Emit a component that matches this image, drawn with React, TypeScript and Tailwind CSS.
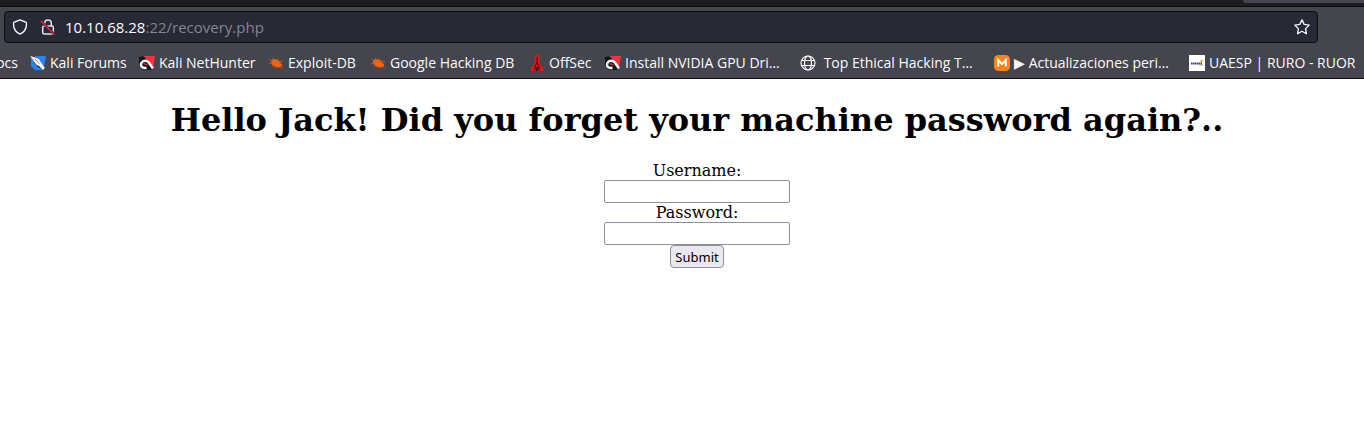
import React from "react";

function DragonIcon({ color }: { color: string }) {
  return (
    <svg viewBox="0 0 16 16" className="h-4 w-4" aria-hidden="true">
      <path d="M1 1H16L13.500 15H5L1 11Z" fill={color} />
      <path d="M0 1L4 1L10 5L12 9L15.500 13L14 15L8 12L5 9L3 5Z" fill="#17171c" />
      <path d="M0 1L4.500 2L9 4L11.500 8L15 13L13 15L9.500 11.500L6.500 10L4 6.500Z" fill="#f4f4f4" />
      <path d="M5 4L9 8.500" stroke="#666" strokeWidth="0.8" />
    </svg>
  );
}

function HookIcon() {
  return (
    <svg viewBox="0 0 16 16" className="h-4 w-4" aria-hidden="true">
      <path d="M0 2L5 1L14 13L12 15H4L0 11Z" fill="#17171c" />
      <path d="M4 1H16L14 13L9 5Z" fill="#f5333f" />
      <path d="M14 13.500L10.500 8.500C8.500 4.800 4 4.800 2.500 7.800C1 10.800 3 13.800 7.500 12.800" fill="none" stroke="#f6f6f6" strokeWidth="2.500" />
      <path d="M4.500 8.500L8.500 10" stroke="#f5333f" strokeWidth="1.3" />
    </svg>
  );
}

function BugIcon() {
  return (
    <svg viewBox="0 0 16 16" className="h-4 w-4" aria-hidden="true">
      <path d="M3 5.500C5 3.500 9 4 11 6L14.500 10L12.500 12.500C9 13 5 11.500 3.500 9Z" fill="#ee6413" />
      <path d="M4 6L1.500 4M4 8L1 8.500M6 5L5 2.500M9 5L10 3.500M11 6L15 6.500M6 10L4 12M8 11L7.500 13M12 11L15 13.500" stroke="#c45a1b" strokeWidth="0.9" />
    </svg>
  );
}

function OffSecIcon() {
  return (
    <svg viewBox="0 0 16 16" className="h-4 w-4" aria-hidden="true">
      <path d="M5.500 0H10.500V8L14.500 13.500V16H1.500V13.500L5.500 8Z" fill="#d31a1d" />
      <path d="M8 2V9M8 8L6 11V15M8 8L10 11V15" stroke="#3a080b" strokeWidth="0.9" fill="none" />
      <path d="M7 12H9V16H7Z" fill="#3a1a20" />
    </svg>
  );
}

function GlobeIcon() {
  return (
    <svg viewBox="0 0 16 16" className="h-4 w-4" fill="none" stroke="#fbfbfe" strokeWidth="1.2" aria-hidden="true">
      <circle cx="8" cy="8" r="7" />
      <ellipse cx="8" cy="8" rx="3.500" ry="7" />
      <path d="M1.500 5.500H14.500M1.500 10.500H14.500" />
    </svg>
  );
}

function OrangeIcon() {
  return (
    <svg viewBox="0 0 16 16" className="h-4 w-4" aria-hidden="true">
      <rect width="16" height="16" rx="4.500" fill="#f98418" />
      <path d="M4.200 11.500V5L8 9L11.800 5V11.500" fill="none" stroke="#fff" strokeWidth="2" />
    </svg>
  );
}

function UaespIcon() {
  return (
    <svg viewBox="0 0 16 16" className="h-4 w-4" aria-hidden="true">
      <rect width="16" height="16" fill="#fff" />
      <path d="M2 8.500H13" stroke="#33477d" strokeWidth="1.8" strokeDasharray="1.6 0.4" />
      <path d="M10 10H14" stroke="#7d8cae" strokeWidth="0.8" />
      <circle cx="12.500" cy="6" r="1.300" fill="#f5ad24" />
    </svg>
  );
}

const bookmarks: { label: string; icon: React.ReactNode }[] = [
  { label: "Kali Forums", icon: <DragonIcon color="#2385f5" /> },
  { label: "Kali NetHunter", icon: <HookIcon /> },
  { label: "Exploit-DB", icon: <BugIcon /> },
  { label: "Google Hacking DB", icon: <BugIcon /> },
  { label: "OffSec", icon: <OffSecIcon /> },
  { label: "Install NVIDIA GPU Dri…", icon: <HookIcon /> },
  { label: "\u00a0Top Ethical Hacking T…", icon: <GlobeIcon /> },
  { label: "▶ Actualizaciones peri…", icon: <OrangeIcon /> },
  { label: "UAESP | RURO - RUOR", icon: <UaespIcon /> },
];

function AddressBar() {
  return (
    <div className="mr-[46px] ml-1 flex h-8 items-center rounded-sm border border-[#0c0c0d] bg-[#272935] px-[7px]">
      <button type="button" aria-label="Site protection" className="h-4 w-4">
        <svg viewBox="0 0 16 16" className="h-4 w-4" fill="none" stroke="#fbfbfe" strokeWidth="1.3" strokeLinejoin="round">
          <path d="M8 .8L14.300 3.300C15 8.500 12.500 13 8 15.200C3.500 13 1 8.500 1.700 3.300Z" />
        </svg>
      </button>
      <button type="button" aria-label="Connection not secure" className="ml-3 h-4 w-4">
        <svg viewBox="0 0 16 16" className="h-4 w-4" fill="none">
          <path d="M4.700 7V4.200A3.300 3.300 0 0 1 11.300 4.200V7" stroke="#e4e4ea" strokeWidth="1.500" />
          <rect x="2.700" y="7" width="10.600" height="8" rx="1.500" stroke="#e4e4ea" strokeWidth="1.500" />
          <path d="M1 2L14.500 15.500" stroke="#272935" strokeWidth="2.500" />
          <path d="M1 2L14.500 15.500" stroke="#e22850" strokeWidth="1.500" />
        </svg>
      </button>
      <div className="ml-[9px] flex-1 text-[15px] leading-5 whitespace-nowrap text-[#85868e]">
        <span className="text-[#fbfbfe]">10.10.68.28</span>:22/recovery.php
      </div>
      <button type="button" aria-label="Bookmark this page" className="h-4 w-4">
        <svg viewBox="0 0 16 16" className="h-4 w-4" fill="none" stroke="#fbfbfe" strokeWidth="1.3" strokeLinejoin="round">
          <path d="M8 .9L10.200 5.400L15.200 6.100L11.600 9.600L12.400 14.700L8 12.300L3.600 14.700L4.400 9.600L.8 6.100L5.800 5.400Z" />
        </svg>
      </button>
    </div>
  );
}

export default function App() {
  return (
    <div className="min-h-screen overflow-hidden bg-white font-['Open_Sans','Noto_Sans',sans-serif]">
      <header className="border-b border-[#0c0c0d] bg-[#45454d]">
        <div className="flex h-[7px] justify-end border-b border-[#0c0c0d] bg-[#1c1b22]">
          <div className="h-[3px] w-[121px] rounded-bl-sm bg-[#45454d]" />
        </div>
        <div className="pt-1">
          <AddressBar />
        </div>
        <nav
          aria-label="Bookmarks"
          className="grid h-[35px] grid-cols-[18px_97px_117px_90px_147px_64px_183px_182px_183px_auto] items-center gap-3 pt-1 text-[14px] leading-5 whitespace-nowrap text-[#fbfbfe]"
        >
          <a href="#" className="flex justify-end overflow-hidden">ocs</a>
          {bookmarks.map((b) => (
            <a key={b.label} href="#" className="flex items-center gap-1">
              {b.icon}
              <span>{b.label}</span>
            </a>
          ))}
        </nav>
      </header>
      <main className="pl-[30px] text-center font-['DejaVu_Serif',serif] text-base leading-[19px] text-black">
        <h1 className="py-[21px] text-[32px] leading-10 font-bold">Hello Jack! Did you forget your machine password again?..</h1>
        <form className="flex flex-col items-center" onSubmit={(e) => e.preventDefault()}>
          <label htmlFor="username">Username:</label>
          <input id="username" type="text" className="h-[23px] w-[186px] rounded-xs border border-[#8f8f9d] bg-white px-1 font-['Noto_Sans',sans-serif] text-[13px]" />
          <label htmlFor="password">Password:</label>
          <input id="password" type="password" className="h-[23px] w-[186px] rounded-xs border border-[#8f8f9d] bg-white px-1 font-['Noto_Sans',sans-serif] text-[13px]" />
          <button type="submit" className="h-[23px] rounded-sm border border-[#8f8f9d] bg-[#e9e9ed] px-1 font-['Noto_Sans',sans-serif] text-[13px] leading-5">Submit</button>
        </form>
      </main>
    </div>
  );
}
